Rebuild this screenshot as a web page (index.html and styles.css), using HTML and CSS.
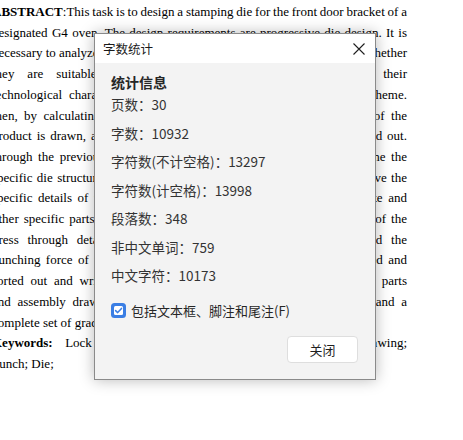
FILE: index.html
```html
<!DOCTYPE html>
<html lang="zh-CN">
<head>
<meta charset="utf-8">
<title>字数统计</title>
<link rel="stylesheet" href="styles.css">
</head>
<body>
<div class="doc">
  <div class="j"><b>ABSTRACT</b>:This task is to design a stamping die for the front door bracket of a</div>
  <div class="j">designated G4 oven. The design requirements are progressive die design. It is</div>
  <div class="j">necessary to analyze the process of the stamping parts and to determine whether</div>
  <div class="j">they are suitable for the stamping processing according to their</div>
  <div class="j">technological characteristics, and then determine the best process scheme.</div>
  <div class="j">then, by calculating the size of the blank, the strip layout drawing of the</div>
  <div class="j">product is drawn, and the material utilization rate of the strip is worked out.</div>
  <div class="j">through the previous calculation and analysis, we can further determine the</div>
  <div class="j">specific die structure, and then on the basis of this structure we can solve the</div>
  <div class="j">specific details of the punch, the die, the stripper plate, the fixed plate and</div>
  <div class="j">other specific parts of the mould, and then we can check the tonnage of the</div>
  <div class="j">press through detailed calculations of the total blanking force and the</div>
  <div class="j">punching force of the die. Finally, all the design data are then checked and</div>
  <div class="j">sorted out and written into the design instructions, and then all the parts</div>
  <div class="j">and assembly drawings of the progressive stamping die are drawn, and a</div>
  <div class="l">complete set of graduation design is completed.</div>
  <div class="j"><b>Keywords:</b> Lock bracket; Progressive die; Stamping die; Drawing;</div>
  <div class="l">Punch; Die;</div>
</div>

<div class="dialog">
  <div class="titlebar">
    <span class="title">字数统计</span>
    <svg class="close" width="12" height="12" viewBox="0 0 12 12"><path d="M0.5 0.5 L11.5 11.5 M11.5 0.5 L0.5 11.5" stroke="#1f1f1f" stroke-width="1.1" fill="none"/></svg>
  </div>
  <div class="content">
    <div class="heading">统计信息</div>
    <div class="rows">
      <div class="row">页数：30</div>
      <div class="row">字数：10932</div>
      <div class="row">字符数(不计空格)：13297</div>
      <div class="row">字符数(计空格)：13998</div>
      <div class="row">段落数：348</div>
      <div class="row">非中文单词：759</div>
      <div class="row">中文字符：10173</div>
    </div>
    <div class="check">
      <svg class="box" width="15" height="15" viewBox="0 0 15 15">
        <rect x="0" y="0" width="15" height="15" rx="3.5" fill="#3a7ee4"/>
        <rect x="3" y="3" width="9" height="9" rx="1.5" fill="#ffffff"/>
        <path d="M4.6 7.6 L6.7 9.6 L10.5 5.4" stroke="#3a7ee4" stroke-width="1.5" fill="none" stroke-linecap="round" stroke-linejoin="round"/>
      </svg>
      <span>包括文本框、脚注和尾注(F)</span>
    </div>
    <div class="actions">
      <div class="btn">关闭</div>
    </div>
  </div>
</div>
</body>
</html>
```

FILE: styles.css
```css
html, body {
  margin: 0;
  padding: 0;
}
body {
  width: 463px;
  height: 440px;
  overflow: hidden;
  position: relative;
  background: #ffffff;
}
.doc {
  margin-left: -8px;
  width: 415px;
  padding-top: 2px;
  font-family: "Liberation Serif", "Times New Roman", serif;
  font-size: 13px;
  line-height: 20.7px;
  color: #000;
}
.doc .j {
  text-align: justify;
  text-align-last: justify;
  word-spacing: -2.5px;
}
.doc .l {
  text-align: left;
}
.dialog {
  position: absolute;
  left: 94px;
  top: 33px;
  width: 280px;
  height: 345px;
  border: 1px solid #8a8a8a;
  background: #f3f3f3;
  box-shadow: 0 0 14px rgba(0, 0, 0, 0.28);
  font-family: "Noto Sans CJK SC", "Noto Sans", sans-serif;
  display: flex;
  flex-direction: column;
}
.titlebar {
  height: 29px;
  background: #ffffff;
  display: flex;
  align-items: center;
  justify-content: space-between;
  padding: 0 10px 0 8px;
}
.title {
  font-size: 12.5px;
  color: #1a1a1a;
}
.close {
  display: block;
}
.content {
  flex: 1;
  display: flex;
  flex-direction: column;
  padding: 11px 16px 0 16px;
}
.heading {
  font-weight: bold;
  font-size: 14px;
  line-height: 16px;
  color: #262626;
}
.row {
  font-size: 13.5px;
  line-height: 28.5px;
  color: #333333;
}
.check {
  margin-top: 10px;
  height: 21px;
  display: flex;
  align-items: center;
  gap: 5px;
  font-size: 13px;
  color: #262626;
}
.box {
  display: block;
  flex: none;
}
.actions {
  margin-top: auto;
  margin-bottom: 16px;
  display: flex;
  justify-content: flex-end;
  padding-right: 1px;
}
.btn {
  width: 69px;
  height: 25px;
  border: 1px solid #dedede;
  border-radius: 4px;
  background: #ffffff;
  display: flex;
  align-items: center;
  justify-content: center;
  font-size: 13px;
  color: #1f1f1f;
}
```
